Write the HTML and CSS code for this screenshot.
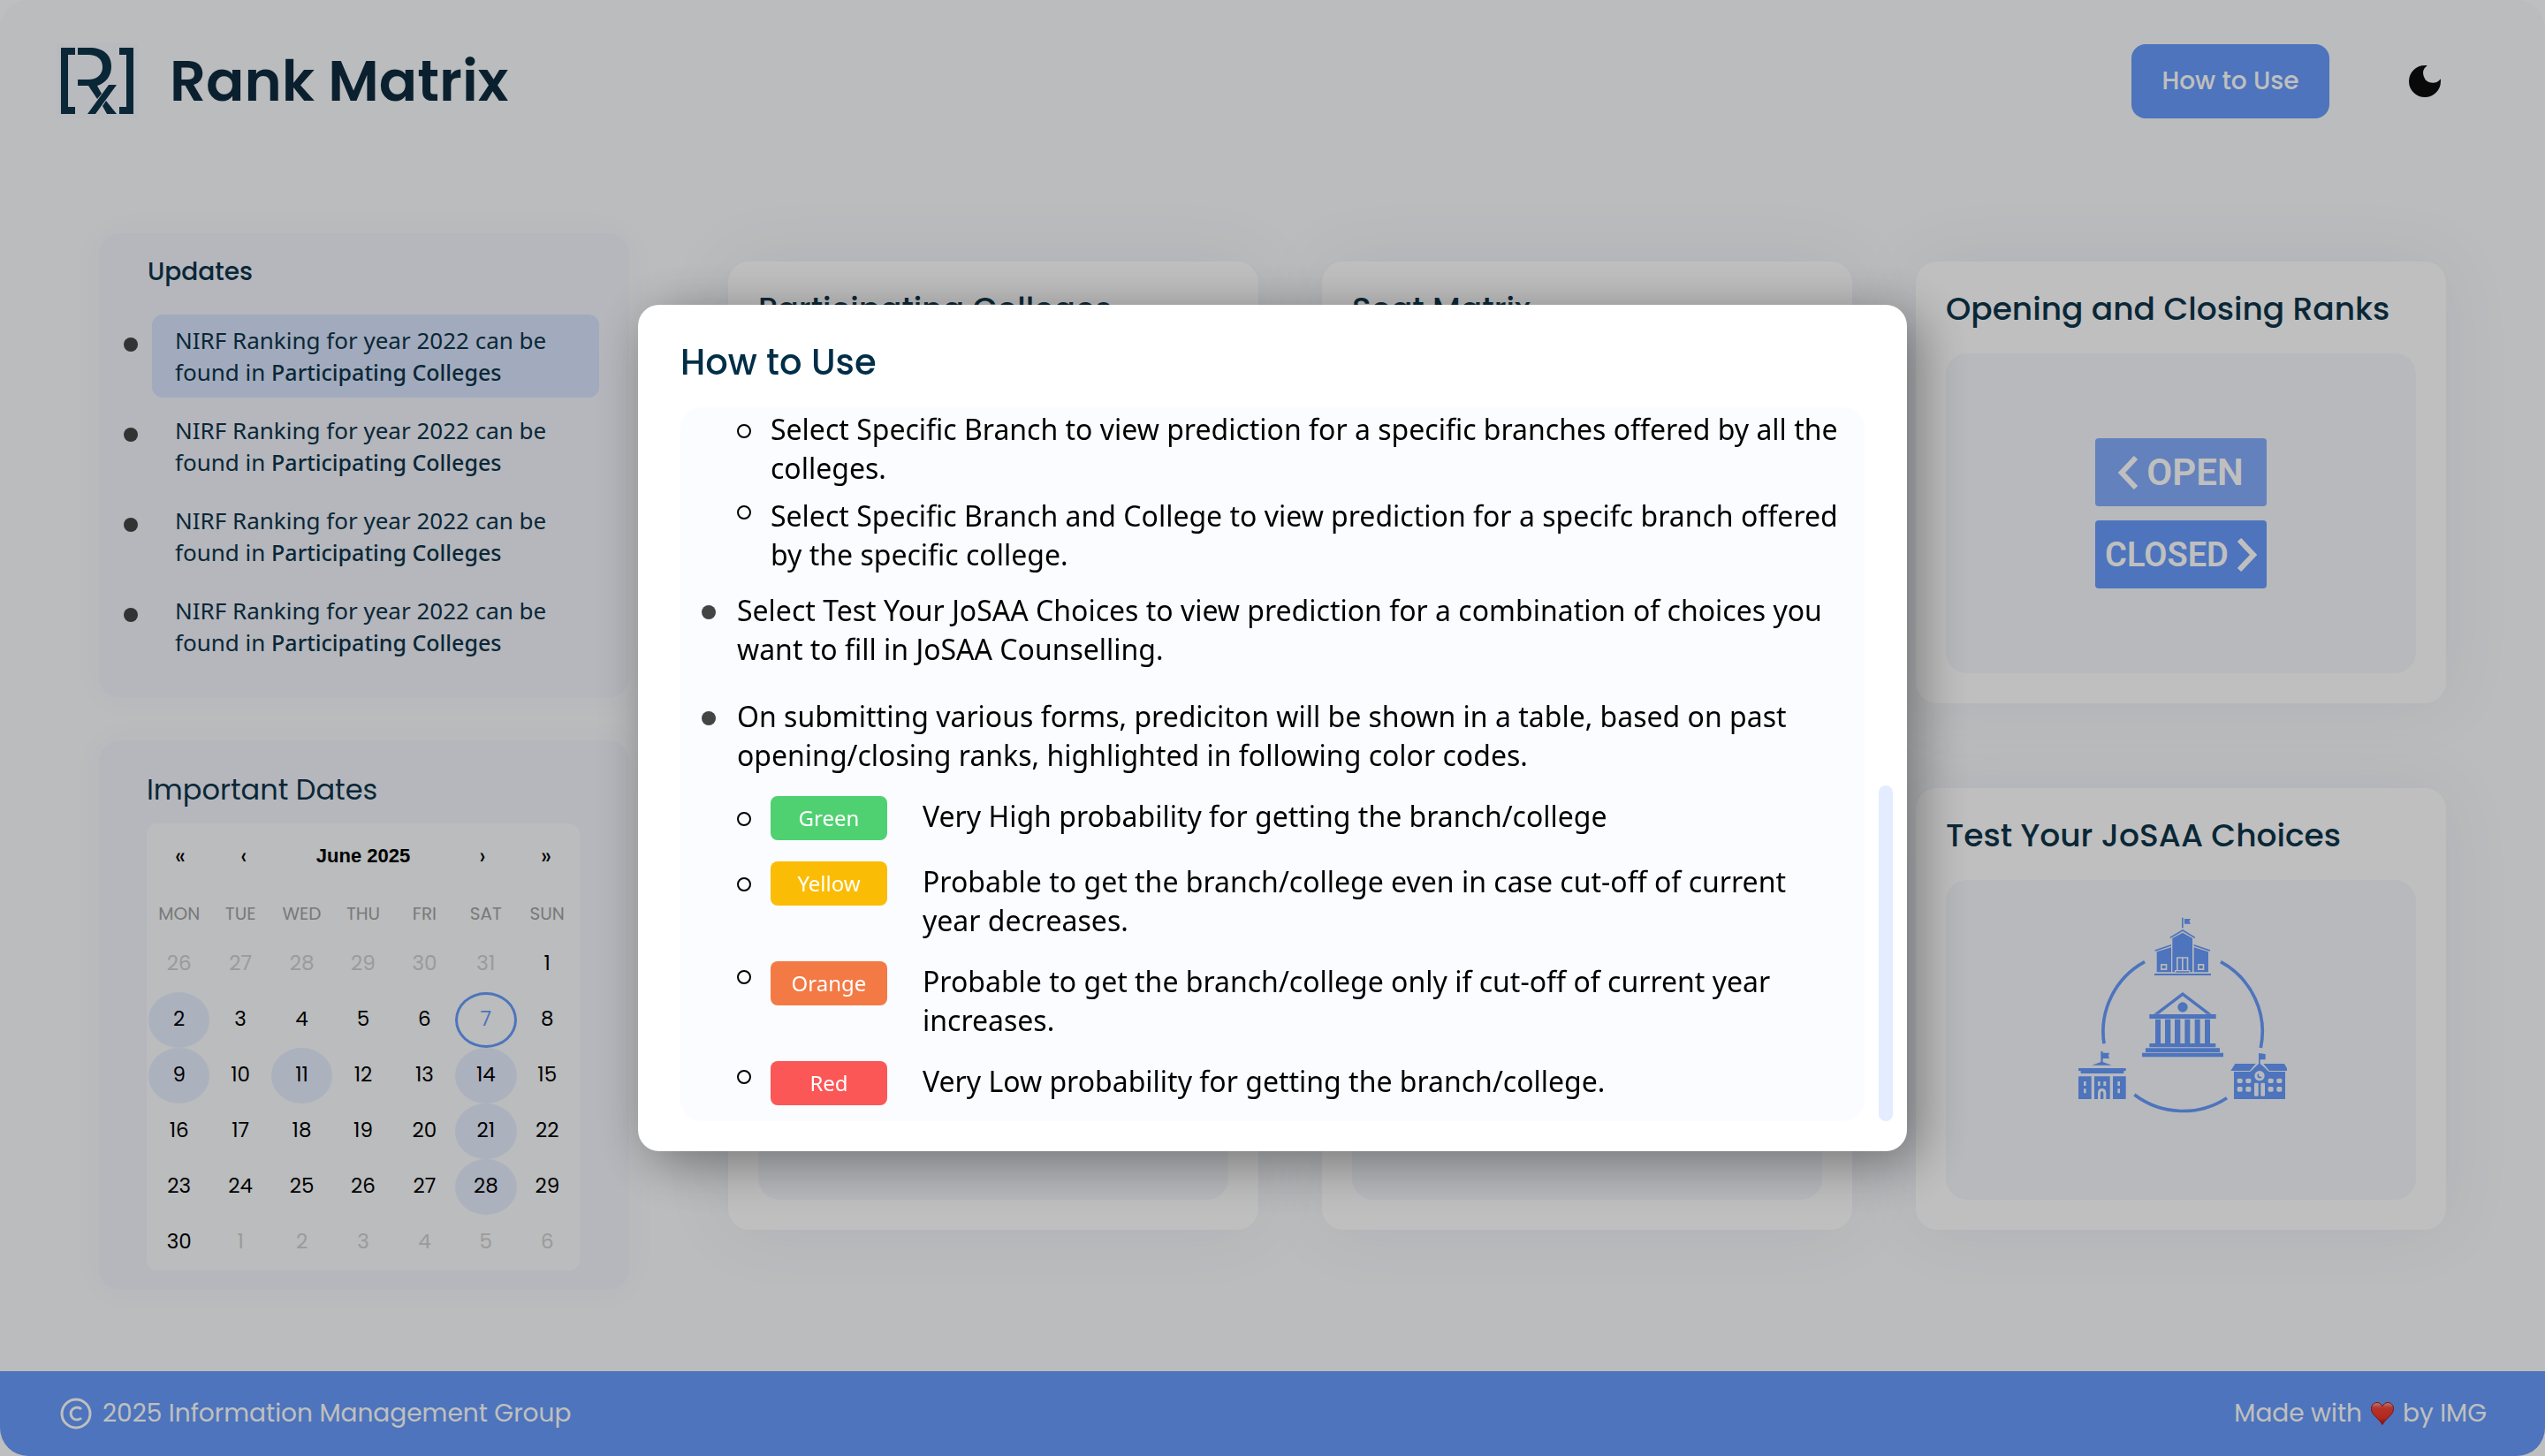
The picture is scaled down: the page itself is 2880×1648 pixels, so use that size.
FILE: index.html
```html
<!DOCTYPE html>
<html lang="en">
<head>
<meta charset="utf-8">
<meta name="viewport" content="width=device-width, initial-scale=1">
<title>Rank Matrix</title>
<link rel="stylesheet" href="styles.css">
</head>
<body>
<div class="page">
  <header class="header">
    <a class="brand" href="#">
      <svg class="brand-logo" viewBox="0 0 92 85" aria-hidden="true">
        <path fill="#f7f8fe" d="M0 0h92v85H0z"/>
        <g fill="#0e354a">
          <path d="M5 5h16v8h-8v59h8v8H5zM87 5H71v8h8v59h-8v8h16z"/>
          <path d="M24 5h13c16 0 25 8 25 21 0 11-6 19-16 22l5 9-5 6-10-15H24v-7h12c10 0 16-6 16-14 0-9-6-14-16-14H24z"/>
          <path d="M59 47h9L44 80h-9zM56 65l12 15H57l-5-9z"/>
        </g>
      </svg>
      <span class="brand-name">Rank Matrix</span>
    </a>
    <div class="header-actions">
      <button class="help-button" type="button">How to Use</button>
      <button class="theme-button" type="button" aria-label="Dark mode">
        <svg viewBox="3 3 18 18"><path d="M12 3a9 9 0 1 0 9 9c0-.46-.04-.92-.1-1.36a5.39 5.39 0 0 1-4.4 2.26 5.4 5.4 0 0 1-3.14-9.8c-.44-.06-.9-.1-1.36-.1z"/></svg>
      </button>
    </div>
  </header>

  <main class="main">
    <aside class="sidebar">
      <section class="side-card updates">
        <h2 class="updates-title">Updates</h2>
        <ul class="updates-list">
          <li class="update"><span class="dot"></span><p class="update-text is-new">NIRF Ranking for year 2022 can be found in <strong>Participating Colleges</strong></p></li>
          <li class="update"><span class="dot"></span><p class="update-text">NIRF Ranking for year 2022 can be found in <strong>Participating Colleges</strong></p></li>
          <li class="update"><span class="dot"></span><p class="update-text">NIRF Ranking for year 2022 can be found in <strong>Participating Colleges</strong></p></li>
          <li class="update"><span class="dot"></span><p class="update-text">NIRF Ranking for year 2022 can be found in <strong>Participating Colleges</strong></p></li>
        </ul>
      </section>

      <section class="side-card dates">
        <h2 class="dates-title">Important Dates</h2>
        <div class="calendar">
          <div class="calendar-nav">
            <button type="button" aria-label="Previous year">«</button>
            <button type="button" aria-label="Previous month">‹</button>
            <span class="calendar-month">June 2025</span>
            <button type="button" aria-label="Next month">›</button>
            <button type="button" aria-label="Next year">»</button>
          </div>
          <table class="days">
            <thead><tr><th>MON</th><th>TUE</th><th>WED</th><th>THU</th><th>FRI</th><th>SAT</th><th>SUN</th></tr></thead>
            <tbody>
              <tr><td class="out">26</td><td class="out">27</td><td class="out">28</td><td class="out">29</td><td class="out">30</td><td class="out">31</td><td>1</td></tr>
              <tr><td class="event">2</td><td>3</td><td>4</td><td>5</td><td>6</td><td class="today">7</td><td>8</td></tr>
              <tr><td class="event">9</td><td>10</td><td class="event">11</td><td>12</td><td>13</td><td class="event">14</td><td>15</td></tr>
              <tr><td>16</td><td>17</td><td>18</td><td>19</td><td>20</td><td class="event">21</td><td>22</td></tr>
              <tr><td>23</td><td>24</td><td>25</td><td>26</td><td>27</td><td class="event">28</td><td>29</td></tr>
              <tr><td>30</td><td class="out">1</td><td class="out">2</td><td class="out">3</td><td class="out">4</td><td class="out">5</td><td class="out">6</td></tr>
            </tbody>
          </table>
        </div>
      </section>
    </aside>

    <section class="cards">
      <article class="card"><h2 class="card-title">Participating Colleges</h2><div class="card-art"></div></article>
      <article class="card"><h2 class="card-title">Seat Matrix</h2><div class="card-art"></div></article>
      <article class="card">
        <h2 class="card-title">Opening and Closing Ranks</h2>
        <div class="card-art">
          <div class="signs">
            <div class="sign sign-open">
              <svg class="chevron" viewBox="0 0 23 38"><path d="M20 2 4 19l16 17"/></svg>
              <span>OPEN</span>
            </div>
            <div class="sign sign-closed">
              <span>CLOSED</span>
              <svg class="chevron" viewBox="0 0 23 38"><path d="m3 2 16 17L3 36"/></svg>
            </div>
          </div>
        </div>
      </article>
      <article class="card"><div class="card-art"></div></article>
      <article class="card"><div class="card-art"></div></article>
      <article class="card">
        <h2 class="card-title">Test Your JoSAA Choices</h2>
        <div class="card-art">
          <svg class="campus" viewBox="114 51 720 840" aria-hidden="true">
            <g fill="none" stroke="#679bfb" stroke-width="11">
              <path d="M351 206A270 270 0 0 0 213 484"/>
              <path d="M609 206A270 270 0 0 1 745 498"/>
              <path d="M316 657A272 272 0 0 0 630 668"/>
            </g>
            <g fill="#679bfb">
              <path d="M477 56h5v35h-5zM486 60h21l-5 8 5 9h-21z"/>
              <path d="M480 96l43 26-3 4-40-24-41 24-3-4zM445 126l35-19 33 19v115h-8v-7h-6v-44h-40v44h-6v7h-8z"/>
              <path d="M441 147v5l-54 18-2-4zM518 147v5l54 18 2-4zM384 246h192v6H384z"/>
              <path fill-rule="evenodd" d="M392 172l49-15v84h-49zM405 213v21h22v-21zM410 218h12v11h-12z"/>
              <path fill-rule="evenodd" d="M567 172l-49-15v84h49zM531 213v21h22v-21zM536 218h12v11h-12z"/>
              <path d="M464 194h13v40h-13zM482 194h12v40h-12zM457 238h45v4h-45z"/>
              <path d="M480 309l98 74h-17l-81-61-81 61h-17z"/>
              <circle cx="480" cy="360" r="17"/>
              <path d="M367 384h226v15H367zM387 401h18v82h-18zM420 401h19v82h-19zM453 401h19v82h-19zM487 401h18v82h-18zM521 401h18v82h-18zM555 401h18v82h-18zM367 483h225v13H367zM354 499h252v14H354zM342 515h276v14H342z"/>
              <path d="M202 510h7v5h22l-3 9 3 10h-22v12l30 11h-67l30-11zM126 567h161v9l-7 1v8H134v-8l-8-1z"/>
              <path fill-rule="evenodd" d="M128 595h42v77h-44v-74zM144 612v15h8v-15zM144 637v15h8v-15z"/>
              <path fill-rule="evenodd" d="M243 595h44v77h-44zM259 612v15h8v-15zM259 637v15h8v-15z"/>
              <path fill-rule="evenodd" d="M180 595h53v77h-13v-20q0-16-14-16t-14 16v20h-12zM192 612v15h8v-15zM211 612v15h9v-15z"/>
              <path d="M201 672v-19q0-8 5-8t5 8v19z"/>
              <path d="M738 516l23 3v19h-18v14l31 27h54v93H654v-93h54l30-27z"/>
              <path d="M658 552h70l-20 24h-65zM754 552h71l14 24h-65z"/>
            </g>
            <g fill="#f5f7fd">
              <circle cx="741" cy="593" r="17"/>
              <rect x="665" y="602" width="18" height="16" rx="5"/><rect x="694" y="602" width="18" height="16" rx="5"/>
              <rect x="665" y="630" width="18" height="17" rx="5"/><rect x="694" y="630" width="18" height="17" rx="5"/>
              <rect x="770" y="602" width="18" height="16" rx="5"/><rect x="799" y="602" width="18" height="16" rx="5"/>
              <rect x="770" y="630" width="18" height="17" rx="5"/><rect x="799" y="630" width="18" height="17" rx="5"/>
              <rect x="723" y="617" width="14" height="45" rx="3"/><rect x="745" y="617" width="14" height="45" rx="3"/>
            </g>
            <path fill="none" stroke="#f5f7fd" stroke-width="3" d="M710 578l24-26M772 578l-24-26"/>
            <path fill="#679bfb" d="M738 584a9 9 0 1 0 12 12h-8q-4-1-4-6z"/>
          </svg>
        </div>
      </article>
    </section>
  </main>

  <footer class="footer">
    <div class="copyright">
      <svg viewBox="0 0 36 36" aria-hidden="true"><g fill="none" stroke="#fff" stroke-width="3"><circle cx="18" cy="18" r="16"/><path d="M24 13a7 7 0 1 0 0 10"/></g></svg>
      <span>2025 Information Management Group</span>
    </div>
    <div class="credit">
      <span>Made with</span>
      <svg viewBox="0 0 26 26" role="img" aria-label="love">
        <defs><linearGradient id="heart" x1="0" y1="0" x2="0" y2="1"><stop offset="0" stop-color="#f0aaa0"/><stop offset=".25" stop-color="#f2453a"/><stop offset=".7" stop-color="#ee3526"/><stop offset="1" stop-color="#a81208"/></linearGradient></defs>
        <path fill="url(#heart)" stroke="#a81a12" d="M13 25.500C10 19 .5 15 .5 7.500C.5 3 3.500.5 7 .5c3 0 5 2 6 4.500C14 2.500 16 .5 19 .5c3.500 0 6.500 2.500 6.500 7C25.500 15 16 19 13 25.500z"/>
      </svg>
      <span>by IMG</span>
    </div>
  </footer>
</div>

<div class="overlay">
  <section class="modal" role="dialog" aria-modal="true" aria-labelledby="help-title">
    <h2 class="modal-title" id="help-title">How to Use</h2>
    <div class="modal-body">
      <div class="guide">
        <ul class="steps">
          <li class="step"><span class="ring"></span><p>Select Specific Branch to view prediction for a specific branches offered by all the colleges.</p></li>
          <li class="step raised"><span class="ring"></span><p>Select Specific Branch and College to view prediction for a specifc branch offered by the specific college.</p></li>
        </ul>
        <ul class="topics">
          <li class="topic"><span class="dot"></span><p>Select Test Your JoSAA Choices to view prediction for a combination of choices you want to fill in JoSAA Counselling.</p></li>
          <li class="topic"><span class="dot"></span><p>On submitting various forms, prediciton will be shown in a table, based on past opening/closing ranks, highlighted in following color codes.</p></li>
        </ul>
        <ul class="codes">
          <li class="code"><span class="ring"></span><span class="badge green">Green</span><p>Very High probability for getting the branch/college</p></li>
          <li class="code"><span class="ring"></span><span class="badge yellow">Yellow</span><p>Probable to get the branch/college even in case cut-off of current year decreases.</p></li>
          <li class="code raised"><span class="ring"></span><span class="badge orange">Orange</span><p>Probable to get the branch/college only if cut-off of current year increases.</p></li>
          <li class="code raised"><span class="ring"></span><span class="badge red">Red</span><p>Very Low probability for getting the branch/college.</p></li>
        </ul>
      </div>
      <div class="scroll-track"><div class="scroll-thumb"></div></div>
    </div>
  </section>
</div>
</body>
</html>
```
FILE: styles.css
```css
* { box-sizing: border-box; }

:root {
  --ink: #0e354a;
  --blue: #679bfb;
  --heading: Poppins, Inter, sans-serif;
  --text: "Noto Sans", sans-serif;
}

body { margin: 0; background: #fff; color: var(--ink); font-family: var(--text); }
h2, p, ul { margin: 0; padding: 0; }
ul { list-style: none; }
button { border: 0; padding: 0; background: none; color: inherit; font: inherit; cursor: pointer; }
svg { display: block; flex: none; }

.page {
  display: flex;
  flex-direction: column;
  min-height: 100vh;
  overflow: hidden;
  border-radius: 32px;
  background: #f9fbfd;
  font-family: var(--heading);
}

/* Header */
.header {
  display: flex;
  align-items: center;
  justify-content: space-between;
  padding: 49px 118px 50px 64px;
}
.brand { display: flex; align-items: center; gap: 36px; color: #0f2b3f; text-decoration: none; }
.brand-logo { width: 92px; height: 85px; }
.brand-name { font-size: 64px; font-weight: 600; line-height: 80px; }
.header-actions { display: flex; align-items: center; gap: 90px; }
.help-button {
  width: 224px;
  height: 84px;
  border-radius: 16px;
  background: var(--blue);
  color: #fff;
  font-size: 28px;
  font-weight: 500;
}
.theme-button svg { width: 36px; height: 36px; fill: #0c0c0c; }

/* Main columns */
.main {
  display: grid;
  grid-template-columns: 600px 1fr;
  gap: 112px;
  padding: 80px 112px;
}
.sidebar { display: flex; flex-direction: column; gap: 48px; }
.side-card {
  border-radius: 24px;
  background: #f2f4fc;
  box-shadow: 0 0 40px rgba(40, 60, 120, .03);
}

.updates { padding: 24px 34px 34px 28px; }
.updates-title { padding-left: 27px; font-size: 28px; font-weight: 500; line-height: 40px; }
.updates-list { display: flex; flex-direction: column; gap: 8px; padding-top: 28px; }
.update { display: flex; gap: 16px; }
.dot { flex: none; width: 16px; height: 16px; border-radius: 50%; background: #444; }
.update .dot { margin-top: 26px; }
.update-text {
  flex: 1;
  padding: 11px 26px;
  border-radius: 12px;
  font-family: var(--text);
  font-size: 26px;
  line-height: 36px;
}
.update-text strong { font-size: 25px; font-weight: 500; }
.is-new { background: #d8e4fc; }

.dates { padding: 36px 56px 22px 54px; }
.dates-title { font-size: 32px; font-weight: 400; line-height: 40px; }
.calendar { margin-top: 18px; padding: 0 2px; border-radius: 12px; background: #f9fbfd; color: #000; }
.calendar-nav { display: grid; grid-template-columns: 72px 72px 1fr 72px 72px; align-items: center; height: 74px; font-size: 26px; }
.calendar-month { text-align: center; font: bold 22px "Liberation Sans", Arial, sans-serif; }
.days { width: 100%; border-collapse: separate; border-spacing: 0; table-layout: fixed; text-align: center; }
.days th { height: 54px; padding: 2px 0 0; color: #a2a2a2; font-size: 20px; font-weight: 400; }
.days td { height: 63px; padding: 0 0 4px; font-size: 23px; }
.days .out { color: #cfcfcf; }
.days .event { border-radius: 50%; background: #e6edfe; }
.days .today { border: 3px solid var(--blue); border-radius: 50%; color: var(--blue); }

/* Cards */
.cards {
  display: grid;
  grid-template-columns: repeat(3, 1fr);
  grid-auto-rows: 500px;
  gap: 96px 72px;
  padding-top: 32px;
}
.card {
  display: flex;
  flex-direction: column;
  padding: 34px;
  border-radius: 24px;
  background: #fff;
  box-shadow: 0 0 80px rgba(40, 50, 110, .08);
}
.card-title { height: 70px; font-size: 36px; font-weight: 500; line-height: 40px; white-space: nowrap; }
.card-art {
  display: flex;
  flex: 1;
  align-items: center;
  justify-content: center;
  border-radius: 24px;
  background: #f5f7fd;
}
.signs { display: flex; flex-direction: column; gap: 16px; width: 194px; }
.sign {
  display: flex;
  align-items: center;
  justify-content: center;
  gap: 9px;
  height: 77px;
  border-radius: 4px;
  color: #fff;
  font-family: Roboto, sans-serif;
  font-size: 42px;
  font-weight: 600;
}
.sign-open { background: #85adfb; }
.sign-closed { background: var(--blue); font-size: 38px; }
.chevron { width: 23px; height: 38px; fill: none; stroke: #fff; stroke-width: 6; }
.campus { width: 240px; height: 280px; }

/* Footer */
.footer {
  display: flex;
  align-items: center;
  justify-content: space-between;
  height: 96px;
  margin-top: auto;
  padding: 0 66px 0 68px;
  background: var(--blue);
  color: #fff;
  font-size: 28px;
  font-weight: 400;
}
.copyright, .credit { display: flex; align-items: center; gap: 12px; }
.copyright svg { width: 36px; height: 36px; }
.credit { gap: 10px; }
.credit svg { width: 26px; height: 26px; }

/* Help dialog */
.overlay {
  position: fixed;
  inset: 0;
  display: flex;
  align-items: center;
  justify-content: center;
  background: rgba(0, 0, 0, .25);
}
.modal {
  width: 1436px;
  max-width: 90%;
  padding: 41px 16px 34px 48px;
  border-radius: 24px;
  background: #fff;
  box-shadow: 12px 12px 60px rgba(0, 0, 0, .4);
}
.modal-title { color: #002e47; font-family: var(--heading); font-size: 40px; font-weight: 500; line-height: 48px; }
.modal-body { display: flex; gap: 16px; margin-top: 27px; }
.guide {
  flex: 1;
  padding: 3px 24px 18px;
  border-radius: 24px;
  background: #fbfcff;
  color: #000;
  font-size: 32px;
  line-height: 44px;
}
.guide p { flex: 1; }
.steps, .topics, .codes { display: flex; flex-direction: column; }
.steps, .codes { padding-left: 40px; }
.steps { gap: 10px; }
.topics { gap: 32px; margin: 19px 0 24px; }
.codes { gap: 24px; }
.step, .topic, .code { display: flex; }
.ring { flex: none; width: 16px; height: 16px; margin: 16px 22px 0 0; border: 2px solid #000; border-radius: 50%; }
.topic .dot { margin: 16px 24px 0 0; }
.code .ring { margin-top: 18px; }
.raised .ring { margin-top: 10px; }
.badge {
  flex: none;
  width: 132px;
  height: 50px;
  margin-right: 40px;
  border-radius: 8px;
  color: #fff;
  font-size: 24px;
  line-height: 50px;
  text-align: center;
}
.green { background: #4fd171; }
.yellow { background: #fbbc05; }
.orange { background: #f37a45; }
.red { background: #fb5757; }
.code p { padding-top: 1px; }
.scroll-track { display: flex; flex-direction: column; justify-content: flex-end; width: 16px; }
.scroll-thumb { height: 47%; border-radius: 8px; background: #e3edff; }
```
